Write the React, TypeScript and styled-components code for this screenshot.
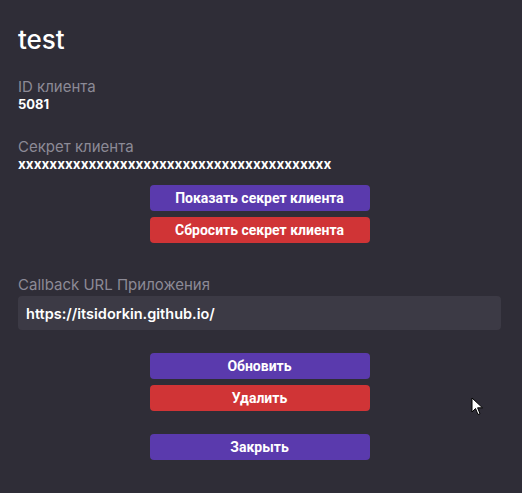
import React from "react";
import styled, { createGlobalStyle } from "styled-components";

const Global = createGlobalStyle`
  html, body { margin: 0; padding: 0; background: #2f2d37; }
  body { font-family: Inter, "Noto Sans", sans-serif; }
`;

const Page = styled.div`
  position: relative;
  width: 522px;
  height: 493px;
  box-sizing: border-box;
  padding: 24px 21px 0 18px;
  background: #2f2d37;
  color: #ffffff;
`;

const Title = styled.h1`
  margin: 0 0 22px;
  font-size: 26px;
  font-weight: 500;
  line-height: 32px;
`;

const Field = styled.div<{ $gap?: number; $top?: number }>`
  display: flex;
  flex-direction: column;
  margin-top: ${(p) => p.$top ?? 0}px;
  margin-bottom: ${(p) => p.$gap ?? 0}px;
`;

const Label = styled.div`
  font-size: 15px;
  line-height: 18px;
  color: #8c8a96;
`;

const Value = styled.div`
  font-size: 13px;
  font-weight: 700;
  line-height: 16px;
  color: #ffffff;
`;

const Secret = styled(Value)`
  font-size: 13.5px;
`;

const Buttons = styled.div<{ $top: number }>`
  display: flex;
  flex-direction: column;
  align-items: center;
  gap: 6px;
  margin-top: ${(p) => p.$top}px;
`;

const Button = styled.button<{ $variant: "primary" | "danger" }>`
  width: 220px;
  height: 26px;
  border: none;
  border-radius: 4px;
  background: ${(p) => (p.$variant === "danger" ? "#d03436" : "#5a3aad")};
  color: #ffffff;
  font-family: Roboto, Inter, sans-serif;
  font-weight: 700;
  font-size: 14px;
  cursor: pointer;
  padding: 0;
`;

const Input = styled.div`
  margin-top: 2px;
  height: 34px;
  border-radius: 4px;
  background: #3c3a45;
  display: flex;
  align-items: center;
  padding: 0 8px;
  font-size: 14.5px;
  font-weight: 600;
  color: #ffffff;
`;

const Cursor = styled.svg`
  position: absolute;
  left: 471px;
  top: 397px;
`;

export default function App() {
  return (
    <>
      <Global />
      <Page>
        <Title>test</Title>
        <Field $gap={26}>
          <Label>ID клиента</Label>
          <Value>5081</Value>
        </Field>
        <Field>
          <Label>Секрет клиента</Label>
          <Secret>{"x".repeat(40)}</Secret>
        </Field>
        <Buttons $top={13}>
          <Button $variant="primary">Показать секрет клиента</Button>
          <Button $variant="danger">Сбросить секрет клиента</Button>
        </Buttons>
        <Field $top={33}>
          <Label>Callback URL Приложения</Label>
          <Input>https://itsidorkin.github.io/</Input>
        </Field>
        <Buttons $top={23}>
          <Button $variant="primary">Обновить</Button>
          <Button $variant="danger">Удалить</Button>
        </Buttons>
        <Buttons $top={23}>
          <Button $variant="primary">Закрыть</Button>
        </Buttons>
        <Cursor width="13" height="20" viewBox="0 0 13 20">
          <path d="M1 1 L1 15 L4.5 11.5 L7 17.5 L9 16.7 L6.6 10.8 L11.5 10.8 Z" fill="#fff" stroke="#000" strokeWidth="1" />
        </Cursor>
      </Page>
    </>
  );
}
